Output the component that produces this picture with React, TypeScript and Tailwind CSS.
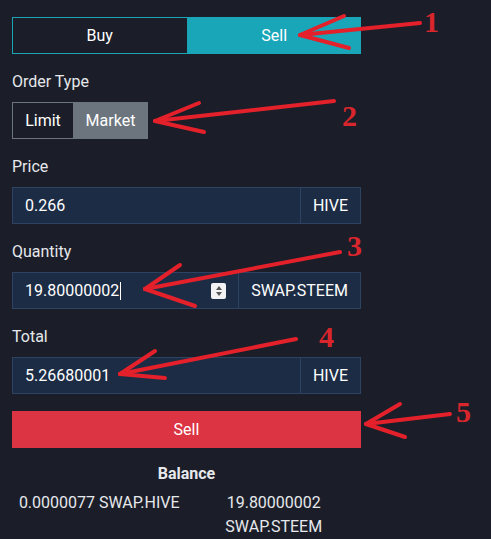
import React from 'react'

function Field({ label, value, unit, spinner, caret }: { label: string; value: string; unit: string; spinner?: boolean; caret?: boolean }) {
  return (
    <div className="mt-4">
      <div className="h-6 leading-6 text-[16px] text-[#e6e8ec]">{label}</div>
      <div className="mt-2 flex h-[37px] border border-[#2e4262] bg-[#1c2c45] text-[16px] text-white">
        <div className="flex flex-1 items-center pl-3 pr-3">
          <span>{value}</span>
          {caret && <span className="ml-px h-[18px] w-px bg-white" />}
          {spinner && (
            <span className="ml-auto flex h-[16px] w-[15px] flex-col items-center justify-center gap-[2px] rounded-[2px] bg-[#f2f2f2]">
              <span className="h-0 w-0 border-x-[3.5px] border-b-[4px] border-x-transparent border-b-[#555]" />
              <span className="h-0 w-0 border-x-[3.5px] border-t-[4px] border-x-transparent border-t-[#555]" />
            </span>
          )}
        </div>
        <div className="flex items-center border-l border-[#2e4262] px-3">{unit}</div>
      </div>
    </div>
  )
}

function Arrow({ tip, tail, h1, h2 }: { tip: [number, number]; tail: [number, number]; h1: [number, number]; h2: [number, number] }) {
  return (
    <g stroke="#e4212b" strokeWidth="4" strokeLinecap="round" fill="none">
      <line x1={tail[0]} y1={tail[1]} x2={tip[0]} y2={tip[1]} />
      <line x1={tip[0]} y1={tip[1]} x2={h1[0]} y2={h1[1]} />
      <line x1={tip[0]} y1={tip[1]} x2={h2[0]} y2={h2[1]} />
    </g>
  )
}

export default function App() {
  return (
    <div className="relative h-[539px] w-[491px] overflow-hidden bg-[#1b1e29] font-['Roboto','Liberation_Sans',sans-serif]">
      <div className="w-[373px] px-3 pt-[17px]">
        <div className="flex h-[37px] text-[16px] text-white">
          <div className="flex flex-1 items-center justify-center border border-[#1ba3b6]">Buy</div>
          <div className="flex flex-1 items-center justify-center bg-[#18a6b8]">Sell</div>
        </div>

        <div className="mt-4 h-6 leading-6 text-[16px] text-[#e6e8ec]">Order Type</div>
        <div className="mt-2 flex h-[37px] w-[136px] text-[16px] text-white">
          <div className="flex w-[61px] items-center justify-center border border-r-0 border-[#6c757d]">Limit</div>
          <div className="flex flex-1 items-center justify-center bg-[#6c757d]">Market</div>
        </div>

        <Field label="Price" value="0.266" unit="HIVE" />
        <Field label="Quantity" value="19.80000002" unit="SWAP.STEEM" spinner caret />
        <Field label="Total" value="5.26680001" unit="HIVE" />

        <button className="mt-[17px] flex h-[37px] w-full items-center justify-center bg-[#dc3442] text-[16px] text-white">Sell</button>

        <div className="mt-[14px] h-6 text-center text-[16px] font-bold leading-6 text-[#e6e8ec]">Balance</div>
        <div className="mt-[5px] grid grid-cols-2 text-[16px] leading-6 text-[#e6e8ec]">
          <div className="px-1 text-center">0.0000077 SWAP.HIVE</div>
          <div className="px-6 text-center">19.80000002 SWAP.STEEM</div>
        </div>
      </div>

      <svg className="pointer-events-none absolute inset-0" width="491" height="539">
        <Arrow tip={[300, 35]} tail={[420, 23]} h1={[344, 16]} h2={[349, 48]} />
        <Arrow tip={[155, 121]} tail={[334, 101]} h1={[199, 103]} h2={[204, 132]} />
        <Arrow tip={[145, 289]} tail={[340, 252]} h1={[180, 265]} h2={[195, 306]} />
        <Arrow tip={[120, 374]} tail={[296, 339]} h1={[155, 351]} h2={[165, 378]} />
        <Arrow tip={[366, 424]} tail={[450, 414]} h1={[400, 404]} h2={[405, 437]} />
      </svg>
      <div className="absolute left-[424px] top-[6px] font-['Liberation_Serif',serif] text-[30px] font-bold leading-8 text-[#d8262c]">1</div>
      <div className="absolute left-[342px] top-[100px] font-['Liberation_Serif',serif] text-[30px] font-bold leading-8 text-[#d8262c]">2</div>
      <div className="absolute left-[347px] top-[230px] font-['Liberation_Serif',serif] text-[30px] font-bold leading-8 text-[#d8262c]">3</div>
      <div className="absolute left-[319px] top-[321px] font-['Liberation_Serif',serif] text-[30px] font-bold leading-8 text-[#d8262c]">4</div>
      <div className="absolute left-[456px] top-[396px] font-['Liberation_Serif',serif] text-[30px] font-bold leading-8 text-[#d8262c]">5</div>
    </div>
  )
}
